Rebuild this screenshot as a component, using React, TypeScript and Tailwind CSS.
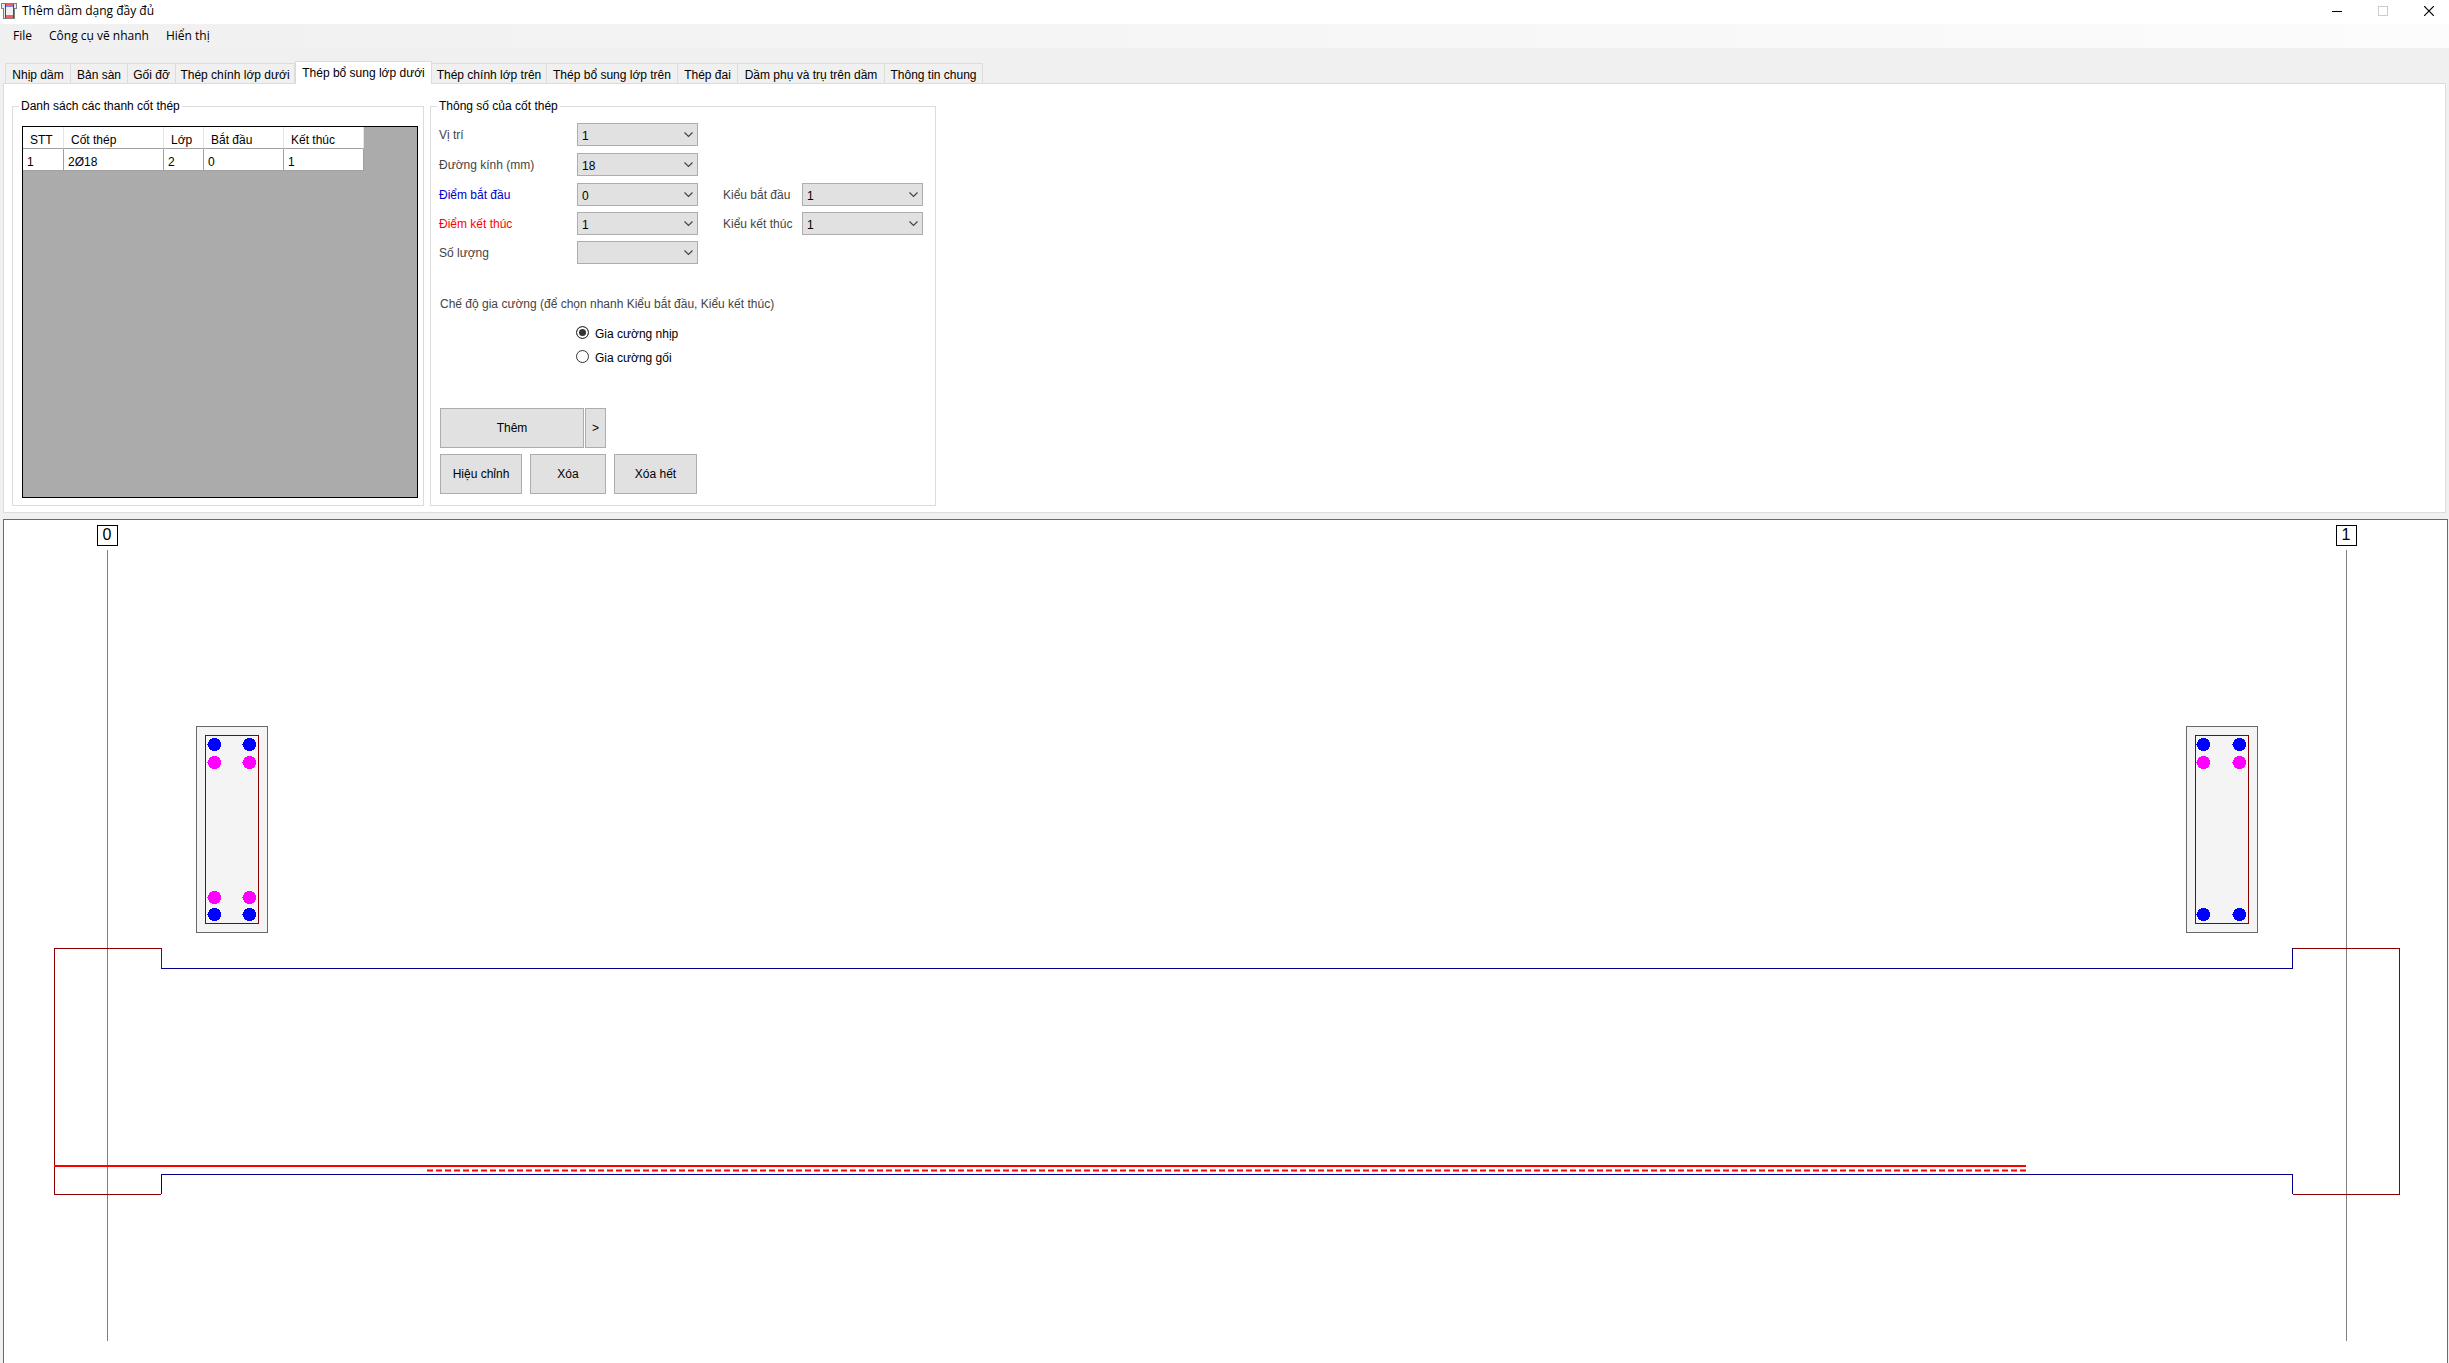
import { useState } from "react";
import type { ReactNode } from "react";

const TABS = [
  { name: "Nhịp dầm", width: "w-[66px]" },
  { name: "Bản sàn", width: "w-[57px]" },
  { name: "Gối đỡ", width: "w-12" },
  { name: "Thép chính lớp dưới", width: "w-[119px]" },
  { name: "Thép bổ sung lớp dưới", width: "w-[137px]" },
  { name: "Thép chính lớp trên", width: "w-[115px]" },
  { name: "Thép bổ sung lớp trên", width: "w-[131px]" },
  { name: "Thép đai", width: "w-[60px]" },
  { name: "Dầm phụ và trụ trên dầm", width: "w-[147px]" },
  { name: "Thông tin chung", width: "w-[98px]" },
];

function AppIcon() {
  return (
    <svg width="16" height="16" viewBox="0 0 16 16" shapeRendering="crispEdges" aria-hidden="true">
      <path d="M0 0H16V6H14V16H2V6H0Z" fill="#808080" />
      <path d="M1 1H15V5H13V15H3V5H1Z" fill="#e8e8e8" />
      <rect x="4" y="1" width="9" height="14" fill="#ff0000" />
      <rect x="5" y="1" width="7" height="2" fill="#f06060" />
      <rect x="5" y="3" width="7" height="10" fill="#f0f0f0" />
      <rect x="5" y="3" width="7" height="1" fill="#8080ff" />
      <rect x="5" y="12" width="7" height="1" fill="#8080ff" />
      <rect x="5" y="13" width="7" height="2" fill="#f06060" />
    </svg>
  );
}

function TitleBar() {
  return (
    <header className="flex h-6 shrink-0 items-center overflow-hidden bg-white pb-0.5 pl-px font-['Open_Sans',sans-serif]">
      <AppIcon />
      <h1 className="ml-[5px] text-[12px] leading-4 text-black">Thêm dầm dạng đầy đủ</h1>
      <div className="-mr-[3px] ml-auto flex h-full text-black">
        <button aria-label="Thu nhỏ" className="flex w-[46px] items-center justify-center">
          <svg width="10" height="10" shapeRendering="crispEdges"><path d="M0 5.5H10" stroke="black" /></svg>
        </button>
        <button aria-label="Phóng to" disabled className="flex w-[46px] items-center justify-center">
          <svg width="10" height="10" shapeRendering="crispEdges"><rect x="0.5" y="0.5" width="9" height="9" fill="none" stroke="#cccccc" /></svg>
        </button>
        <button aria-label="Đóng" className="flex w-[46px] items-center justify-center">
          <svg width="10" height="10"><path d="M0 0L10 10M10 0L0 10" stroke="black" strokeWidth="1.2" /></svg>
        </button>
      </div>
    </header>
  );
}

function MenuBar() {
  return (
    <nav className="flex h-6 shrink-0 items-center gap-[17px] bg-linear-to-r from-[#f0f0f0] to-[#fcfcfc] pl-[13px] font-['Open_Sans',sans-serif] text-[12px] leading-4 text-black">
      <button>File</button>
      <button>Công cụ vẽ nhanh</button>
      <button>Hiển thị</button>
    </nav>
  );
}

function Group({ title, className, children }: { title: string; className: string; children: ReactNode }) {
  return (
    <fieldset className={"min-w-0 border border-[#dcdcdc] " + className}>
      <legend className="ml-1.5 px-0.5 leading-4 text-black">{title}</legend>
      {children}
    </fieldset>
  );
}

function Combo({ id, value }: { id: string; value: string }) {
  return (
    <span className="relative inline-flex">
      <select
        id={id}
        defaultValue={value}
        className="h-[23px] w-[121px] appearance-none border border-[#adadad] bg-[#e1e1e1] pt-0.5 pl-1 leading-4 text-black"
      >
        <option value={value}>{value}</option>
      </select>
      <svg width="9" height="6" viewBox="0 0 9 6" className="pointer-events-none absolute top-[9px] right-[5px]" aria-hidden="true">
        <path d="M0.5 0.5L4.5 4.5L8.5 0.5" fill="none" stroke="#444444" strokeWidth="1.2" />
      </svg>
    </span>
  );
}

function Field({ id, label, value, labelClass }: { id: string; label: string; value: string; labelClass: string }) {
  return (
    <>
      <label htmlFor={id} className={labelClass}>{label}</label>
      <Combo id={id} value={value} />
    </>
  );
}

function PushButton({ className, children }: { className: string; children: ReactNode }) {
  return (
    <button className={"h-10 border border-[#adadad] bg-[#e1e1e1] text-black " + className}>{children}</button>
  );
}

function RebarTable() {
  const th = "h-[22px] border-r border-[#e5e5e5] border-b border-b-[#a0a0a0] pt-1 pl-[7px] text-left font-normal";
  const td = "h-[22px] border-r border-b border-[#a0a0a0] pt-1 pl-1";
  return (
    <div className="mt-3 mr-[5px] mb-[7px] ml-[9px] h-[372px] border border-black bg-[#ababab]">
      <table className="w-[341px] table-fixed border-separate border-spacing-0 bg-white leading-4 text-black">
        <colgroup>
          <col className="w-[41px]" />
          <col className="w-[100px]" />
          <col className="w-10" />
          <col className="w-20" />
          <col className="w-20" />
        </colgroup>
        <thead>
          <tr>
            <th className={th}>STT</th>
            <th className={th}>Cốt thép</th>
            <th className={th}>Lớp</th>
            <th className={th}>Bắt đầu</th>
            <th className={th}>Kết thúc</th>
          </tr>
        </thead>
        <tbody>
          <tr>
            <td className={td}>1</td>
            <td className={td}>2Ø18</td>
            <td className={td}>2</td>
            <td className={td}>0</td>
            <td className={td}>1</td>
          </tr>
        </tbody>
      </table>
    </div>
  );
}

function ParameterForm() {
  const first = "w-[138px] text-[#444444]";
  const second = "ml-[25px] w-[79px] text-[#444444]";
  return (
    <form className="pt-[9px] pb-[11px] pl-2 leading-4" onSubmit={(e) => e.preventDefault()}>
      <div className="flex flex-col gap-[7px]">
        <div className="flex items-center">
          <Field id="vi-tri" label="Vị trí" value="1" labelClass={first} />
        </div>
        <div className="flex items-center">
          <Field id="duong-kinh" label="Đường kính (mm)" value="18" labelClass={first} />
        </div>
        <div className="flex items-center">
          <Field id="diem-bat-dau" label="Điểm bắt đầu" value="0" labelClass="w-[138px] text-[#0000cc]" />
          <Field id="kieu-bat-dau" label="Kiểu bắt đầu" value="1" labelClass={second} />
        </div>
      </div>
      <div className="mt-1.5 flex flex-col gap-1.5">
        <div className="flex items-center">
          <Field id="diem-ket-thuc" label="Điểm kết thúc" value="1" labelClass="w-[138px] text-[#ff0000]" />
          <Field id="kieu-ket-thuc" label="Kiểu kết thúc" value="1" labelClass={second} />
        </div>
        <div className="flex items-center">
          <Field id="so-luong" label="Số lượng" value="" labelClass={first} />
        </div>
      </div>
      <div className="pl-px">
        <p className="mt-8 text-[#444444]">Chế độ gia cường (để chọn nhanh Kiểu bắt đầu, Kiểu kết thúc)</p>
        <div className="mt-2 ml-[136px]">
          {["Gia cường nhịp", "Gia cường gối"].map((text, i) => (
            <label key={text} className="flex h-6 items-center gap-1.5 text-black">
              <input
                type="radio"
                name="che-do"
                defaultChecked={i === 0}
                className="size-[13px] appearance-none rounded-full border border-[#333333] bg-white checked:bg-[#333333] checked:shadow-[inset_0_0_0_2px_white]"
              />
              <span className="pt-[3px]">{text}</span>
            </label>
          ))}
        </div>
        <div className="mt-10 flex gap-px">
          <PushButton className="w-36">Thêm</PushButton>
          <PushButton className="w-[21px]">&gt;</PushButton>
        </div>
        <div className="mt-1.5 flex gap-2">
          <PushButton className="w-[82px]">Hiệu chỉnh</PushButton>
          <PushButton className="w-[76px]">Xóa</PushButton>
          <PushButton className="w-[83px]">Xóa hết</PushButton>
        </div>
      </div>
    </form>
  );
}

function Bar({ x, y, color }: { x: number; y: number; color: string }) {
  return (
    <g fill={color}>
      <rect x={x - 7} y={y} width="2" height="1" />
      <path
        transform={`translate(${x} ${y})`}
        d="M-2 -6H3V-5H5V-4H6V-2H7V3H6V5H5V6H3V7H-2V6H-4V5H-5V3H-6V-2H-5V-4H-4V-5H-2Z"
      />
    </g>
  );
}

function Section({ x, bars }: { x: number; bars: { x: number; y: number; color: string }[] }) {
  return (
    <g>
      <rect x={x + 0.5} y="206.5" width="71" height="206" fill="#f4f4f4" stroke="#696969" />
      <rect x={x + 9.5} y="215.5" width="53" height="188" fill="none" stroke="#8b0000" />
      {bars.map((b) => (
        <Bar key={`${b.x}-${b.y}`} {...b} />
      ))}
    </g>
  );
}

function AxisMark({ x, label }: { x: number; label: string }) {
  return (
    <g>
      <rect x={x - 9.5} y="5.5" width="20" height="20" fill="white" stroke="black" />
      <text x={x} y="20" textAnchor="middle" fontSize="16" fontFamily="'Liberation Sans', Arial, sans-serif">{label}</text>
      <rect x={x} y="30" width="1" height="791" fill="#808080" />
    </g>
  );
}

const BLUE = "#0000ff";
const PINK = "#ff00ff";

function BeamDrawing() {
  const left = [210, 245].flatMap((x) => [
    { x, y: 224, color: BLUE },
    { x, y: 242, color: PINK },
    { x, y: 377, color: PINK },
    { x, y: 394, color: BLUE },
  ]);
  const right = [2199, 2235].flatMap((x) => [
    { x, y: 224, color: BLUE },
    { x, y: 242, color: PINK },
    { x, y: 394, color: BLUE },
  ]);
  return (
    <svg viewBox="0 0 2443 843" className="block w-full" shapeRendering="crispEdges" role="img" aria-label="Bản vẽ dầm">
      <AxisMark x={103} label="0" />
      <AxisMark x={2342} label="1" />
      <Section x={192} bars={left} />
      <Section x={2182} bars={right} />
      <g fill="none" stroke="#00008b">
        <path d="M157 448.5H2288.5V428" />
        <path d="M157.5 674V654.5H2288.5V674" />
      </g>
      <g fill="none" stroke="#8b0000">
        <path d="M157.5 448V428.5H50.5V674.5H157" />
        <path d="M2289 428.5H2395.5V674.5H2289" />
      </g>
      <path d="M50 646H2022" stroke="#ff0000" strokeWidth="2" />
      <path d="M423 650.5H2022" stroke="#ff0000" strokeWidth="2" strokeDasharray="6 3" shapeRendering="auto" />
    </svg>
  );
}

export default function App() {
  const [active, setActive] = useState(4);
  return (
    <div className="flex h-screen flex-col overflow-hidden bg-[#f0f0f0] font-['Liberation_Sans',Arial,sans-serif] text-[12px]">
      <TitleBar />
      <MenuBar />
      <main className="flex min-h-0 flex-1 flex-col pt-[13px] pr-px pl-[3px]">
        <div role="tablist" className="flex h-[22px] shrink-0 items-end pl-0.5 leading-4 text-black">
          {TABS.map(({ name, width }, i) => (
            <button
              key={name}
              role="tab"
              aria-selected={i === active}
              onClick={() => setActive(i)}
              className={
                "shrink-0 whitespace-nowrap " +
                width +
                (i === active
                  ? " relative -mb-px h-[23px] border-x border-t border-[#dcdcdc] bg-white"
                  : " h-5 border-t border-r border-[#dcdcdc] pt-0.5 first:border-l")
              }
            >
              {name}
            </button>
          ))}
        </div>
        <section className="mr-[2px] flex shrink-0 items-start gap-1.5 border border-[#dcdcdc] bg-white pt-[14px] pb-1.5 pl-2">
          <Group title="Danh sách các thanh cốt thép" className="w-[412px]">
            <RebarTable />
          </Group>
          <Group title="Thông số của cốt thép" className="w-[506px]">
            <ParameterForm />
          </Group>
        </section>
        <section className="mt-1.5 min-h-0 flex-1 overflow-hidden border-x border-t border-[#696969] bg-white">
          <BeamDrawing />
        </section>
      </main>
    </div>
  );
}
